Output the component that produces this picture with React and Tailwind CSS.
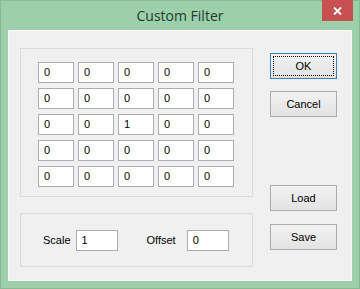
const matrix = [
  [0, 0, 0, 0, 0],
  [0, 0, 0, 0, 0],
  [0, 0, 1, 0, 0],
  [0, 0, 0, 0, 0],
  [0, 0, 0, 0, 0],
];

function Field({ value, className = "" }) {
  return (
    <div
      className={`h-[21px] border border-[#abadb3] bg-white pl-[5px] flex items-center text-[11px] text-black ${className}`}
    >
      {value}
    </div>
  );
}

function Button({ label, focused }) {
  return (
    <div
      className={`h-[26px] w-[67px] flex items-center justify-center border bg-gradient-to-b from-[#f2f2f2] to-[#e3e3e3] text-[11px] text-black ${
        focused ? "border-[#3c7fb1] p-[2px]" : "border-[#acacac]"
      }`}
    >
      {focused ? (
        <div className="w-full h-full flex items-center justify-center border border-dotted border-black">
          {label}
        </div>
      ) : (
        label
      )}
    </div>
  );
}

export default function App() {
  return (
    <div
      className="w-[360px] h-[289px] bg-[#9bd0aa] border border-[#86bb95] flex flex-col"
      style={{ fontFamily: "'Liberation Sans', Arial, sans-serif" }}
    >
      {/* title bar */}
      <div className="relative h-[29px] flex items-center justify-center">
        <span
          className="text-[14px] text-[#263a2c] -mt-[1px]"
          style={{ fontFamily: "'Open Sans', 'Noto Sans', sans-serif" }}
        >
          Custom Filter
        </span>
        <div className="absolute right-[6px] -top-[1px] w-[31px] h-[21px] bg-[#c75050] flex items-center justify-center">
          <svg width="9" height="8" viewBox="0 0 9 8">
            <path d="M1 0.5 L8 7.5 M8 0.5 L1 7.5" stroke="white" strokeWidth="1.8" />
          </svg>
        </div>
      </div>

      {/* client area */}
      <div className="ml-[7px] w-[344px] h-[251px] bg-[#f0f0f0] border border-[#f7f7f7] flex pl-[11px] pt-[17px]">
        <div className="flex flex-col gap-[16px]">
          <div className="w-[233px] h-[149px] border border-[#dcdcdc] pl-[17px] pt-[13px] flex flex-col gap-[5px]">
            {matrix.map((row, i) => (
              <div key={i} className="flex gap-[4px]">
                {row.map((v, j) => (
                  <Field key={j} value={v} className="w-[36px]" />
                ))}
              </div>
            ))}
          </div>
          <div className="w-[233px] h-[54px] border border-[#dcdcdc] flex items-center pl-[22px] text-[11px] text-black">
            <span>Scale</span>
            <Field value={1} className="w-[42px] ml-[5px]" />
            <span className="ml-[29px]">Offset</span>
            <Field value={0} className="w-[42px] ml-[11px]" />
          </div>
        </div>

        <div className="ml-[17px] mt-[5px] flex flex-col">
          <Button label="OK" focused />
          <div className="h-[12px]" />
          <Button label="Cancel" />
          <div className="h-[68px]" />
          <Button label="Load" />
          <div className="h-[13px]" />
          <Button label="Save" />
        </div>
      </div>
    </div>
  );
}
